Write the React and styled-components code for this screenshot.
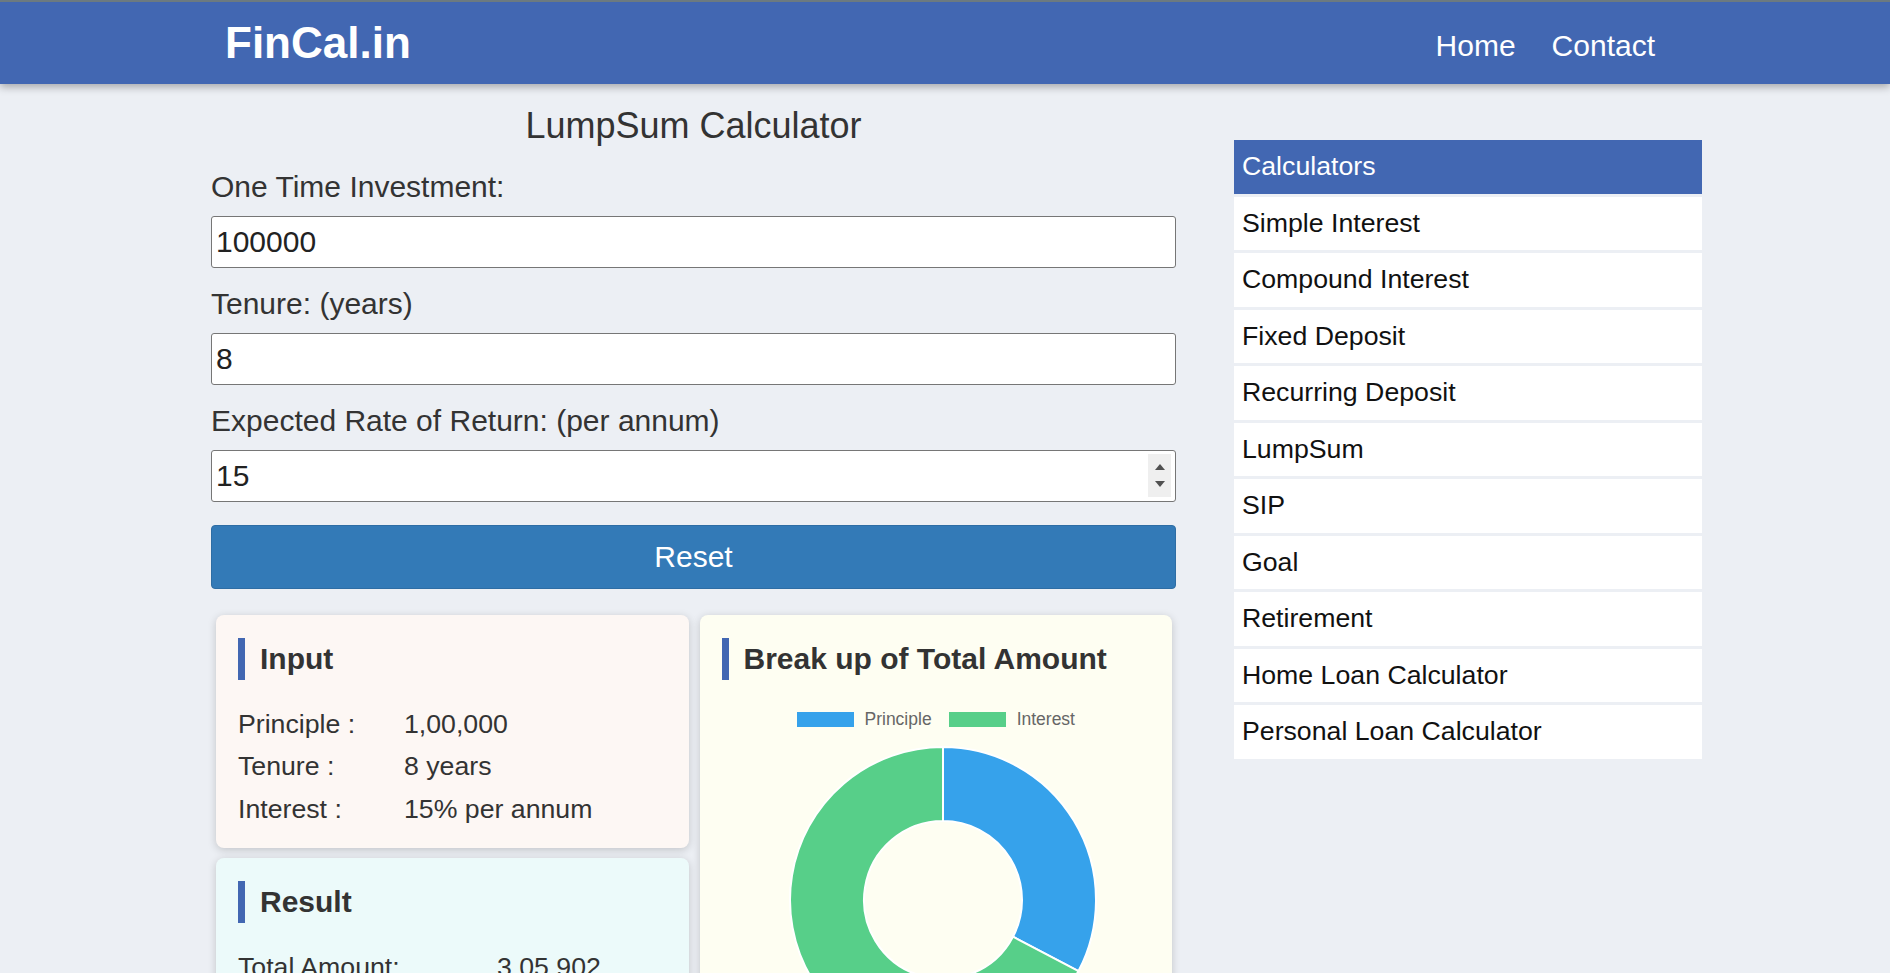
import React from "react";
import styled, { createGlobalStyle } from "styled-components";

const GlobalStyle = createGlobalStyle`
  html { scrollbar-width: none; }
  html::-webkit-scrollbar, body::-webkit-scrollbar { display: none; }
  body {
    margin: 0;
    background: #eceff4;
    font-family: "Liberation Sans", Arial, sans-serif;
    color: #333;
  }
  * { box-sizing: border-box; }
`;

const Header = styled.header`
  height: 84px;
  background: #4267b2;
  border-top: 2px solid #6c7a80;
  box-shadow: 0 3px 8px rgba(0, 0, 0, 0.3);
  display: flex;
  align-items: center;
  justify-content: space-between;
  padding: 0 235px 0 225px;
  position: relative;
  z-index: 1;
`;

const Logo = styled.a`
  color: #fff;
  font-weight: 700;
  font-size: 44px;
  text-decoration: none;
`;

const Nav = styled.nav`
  display: flex;
  gap: 36px;
  padding-top: 5px;
`;

const NavLink = styled.a`
  color: #fff;
  font-size: 30px;
  text-decoration: none;
`;

const Main = styled.main`
  display: flex;
  align-items: flex-start;
  gap: 58px;
  padding-left: 211px;
`;

const FormColumn = styled.section`
  width: 965px;
`;

const Title = styled.h2`
  margin: 21px 0 23px;
  font-size: 36px;
  font-weight: 400;
  text-align: center;
  color: #333;
`;

const Field = styled.div`
  margin-bottom: ${(p) => p.$mb || 19}px;
`;

const Label = styled.label`
  display: block;
  font-size: 30px;
  color: #333;
  margin-bottom: 12px;
`;

const InputWrap = styled.div`
  position: relative;
`;

const TextInput = styled.input`
  display: block;
  width: 100%;
  height: 52px;
  border: 1px solid #767676;
  border-radius: 3px;
  background: #fff;
  padding: 0 4px;
  font-family: inherit;
  font-size: 30px;
  color: #222;
  outline: none;
  -moz-appearance: textfield;
  &::-webkit-inner-spin-button,
  &::-webkit-outer-spin-button {
    -webkit-appearance: none;
    margin: 0;
  }
`;

const Spinner = styled.div`
  position: absolute;
  right: 5px;
  top: 4px;
  bottom: 5px;
  width: 23px;
  background: #efefef;
  display: flex;
  flex-direction: column;
  align-items: center;
  justify-content: space-around;
  padding: 5px 0;
`;

const Arrow = styled.span`
  width: 0;
  height: 0;
  border-left: 5px solid transparent;
  border-right: 5px solid transparent;
  ${(p) =>
    p.$down
      ? "border-top: 6px solid #505050;"
      : "border-bottom: 6px solid #505050;"}
`;

const ResetButton = styled.button`
  display: block;
  width: 100%;
  height: 64px;
  border: 1px solid #2e6da4;
  border-radius: 4px;
  background: #337ab7;
  color: #fff;
  font-family: inherit;
  font-size: 30px;
  cursor: pointer;
`;

const Cards = styled.div`
  display: grid;
  grid-template-columns: 1fr 1fr;
  column-gap: 11px;
  align-items: start;
  padding: 0 4px 0 5px;
  margin-top: 25.5px;
`;

const Stack = styled.div`
  display: flex;
  flex-direction: column;
  gap: 10px;
`;

const Card = styled.div`
  background: ${(p) => p.$bg};
  border-radius: 8px;
  box-shadow: 0 2px 9px rgba(0, 0, 0, 0.18);
  padding: 23px 22px ${(p) => p.$pb || 17}px;
`;

const CardTitle = styled.h3`
  margin: 0;
  height: 42px;
  line-height: 42px;
  border-left: 7px solid #4267b2;
  padding-left: 15px;
  font-size: 30px;
  font-weight: 700;
  color: #333;
`;

const Rows = styled.div`
  display: grid;
  grid-template-columns: ${(p) => p.$labelWidth}px 1fr;
  margin-top: 23px;
  font-size: 26.7px;
  line-height: 42.7px;
  color: #333;
`;

const Legend = styled.div`
  display: flex;
  justify-content: center;
  align-items: center;
  height: 20px;
  margin-top: 30px;
  gap: 17px;
`;

const LegendItem = styled.div`
  display: flex;
  align-items: center;
  gap: 11px;
  font-size: 17.5px;
  color: #666;
`;

const Swatch = styled.span`
  width: 57px;
  height: 15px;
  background: ${(p) => p.$color};
`;

const ChartArea = styled.div`
  display: flex;
  justify-content: center;
  margin-top: 15px;
  & > svg {
    margin-left: 14px;
  }
`;

const Sidebar = styled.aside`
  width: 468px;
  margin-top: 56px;
  display: flex;
  flex-direction: column;
  gap: 3px;
`;

const SideHead = styled.div`
  height: 53.5px;
  background: #4267b2;
  color: #fff;
  font-size: 26.7px;
  padding: 11px 8px 0;
`;

const SideItem = styled.a`
  display: block;
  height: 53.5px;
  background: #fff;
  color: #111;
  font-size: 26.7px;
  padding: 11px 8px 0;
  text-decoration: none;
`;

const calculators = [
  "Simple Interest",
  "Compound Interest",
  "Fixed Deposit",
  "Recurring Deposit",
  "LumpSum",
  "SIP",
  "Goal",
  "Retirement",
  "Home Loan Calculator",
  "Personal Loan Calculator",
];

function Donut() {
  return (
    <svg width="310" height="310" viewBox="0 0 310 310">
      <path
        d="M155,2 A153,153 0 0 1 290.5,226.07 L224.96,191.7 A79,79 0 0 0 155,76 Z"
        fill="#36a2eb"
        stroke="#fff"
        strokeWidth="2"
      />
      <path
        d="M290.5,226.07 A153,153 0 1 1 155,2 L155,76 A79,79 0 1 0 224.96,191.7 Z"
        fill="#57cf89"
        stroke="#fff"
        strokeWidth="2"
      />
    </svg>
  );
}

export default function App() {
  return (
    <>
      <GlobalStyle />
      <Header>
        <Logo href="#">FinCal.in</Logo>
        <Nav>
          <NavLink href="#">Home</NavLink>
          <NavLink href="#">Contact</NavLink>
        </Nav>
      </Header>
      <Main>
        <FormColumn>
          <Title>LumpSum Calculator</Title>
          <Field>
            <Label>One Time Investment:</Label>
            <TextInput type="text" defaultValue="100000" />
          </Field>
          <Field>
            <Label>Tenure: (years)</Label>
            <TextInput type="text" defaultValue="8" />
          </Field>
          <Field $mb={23}>
            <Label>Expected Rate of Return: (per annum)</Label>
            <InputWrap>
              <TextInput type="number" defaultValue="15" />
              <Spinner>
                <Arrow />
                <Arrow $down />
              </Spinner>
            </InputWrap>
          </Field>
          <ResetButton>Reset</ResetButton>
          <Cards>
            <Stack>
              <Card $bg="#fdf7f4" $pb={17}>
                <CardTitle>Input</CardTitle>
                <Rows $labelWidth={166}>
                  <span>Principle :</span>
                  <span>1,00,000</span>
                  <span>Tenure :</span>
                  <span>8 years</span>
                  <span>Interest :</span>
                  <span>15% per annum</span>
                </Rows>
              </Card>
              <Card $bg="#ecfafa">
                <CardTitle>Result</CardTitle>
                <Rows $labelWidth={259}>
                  <span>Total Amount:</span>
                  <span>3,05,902</span>
                  <span>Principle :</span>
                  <span>1,00,000</span>
                  <span>Interest Earned :</span>
                  <span>2,05,902</span>
                </Rows>
              </Card>
            </Stack>
            <Card $bg="#fefef2" $pb={30}>
              <CardTitle>Break up of Total Amount</CardTitle>
              <Legend>
                <LegendItem>
                  <Swatch $color="#36a2eb" />
                  Principle
                </LegendItem>
                <LegendItem>
                  <Swatch $color="#57cf89" />
                  Interest
                </LegendItem>
              </Legend>
              <ChartArea>
                <Donut />
              </ChartArea>
            </Card>
          </Cards>
        </FormColumn>
        <Sidebar>
          <SideHead>Calculators</SideHead>
          {calculators.map((c) => (
            <SideItem key={c} href="#">
              {c}
            </SideItem>
          ))}
        </Sidebar>
      </Main>
    </>
  );
}
